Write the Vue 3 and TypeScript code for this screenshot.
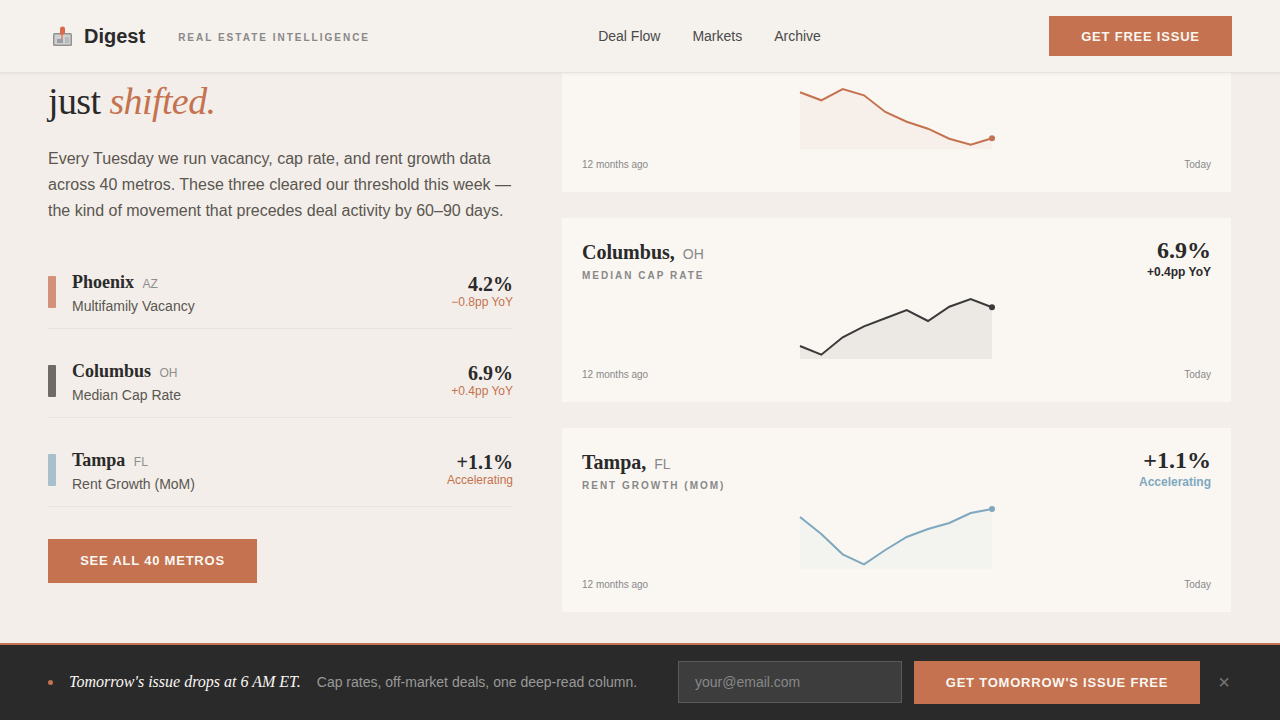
<script setup lang="ts">
type Metro = {
  name: string
  state: string
  metric: string
  value: string
  change: string
  color: string
  bar: string
  changeClass: string
  fillOpacity: number
  points: number[]
}

const metros: Metro[] = [
  {
    name: 'Phoenix',
    state: 'AZ',
    metric: 'Multifamily Vacancy',
    value: '4.2%',
    change: '−0.8pp YoY',
    color: '#c4724f',
    bar: '#d4917a',
    changeClass: 'accent',
    fillOpacity: 0.06,
    points: [4.3, 12.3, 1, 7.3, 24, 33.7, 40.7, 50.7, 56.7, 50.3],
  },
  {
    name: 'Columbus',
    state: 'OH',
    metric: 'Median Cap Rate',
    value: '6.9%',
    change: '+0.4pp YoY',
    color: '#3a3a3a',
    bar: '#6e6a65',
    changeClass: 'dark',
    fillOpacity: 0.07,
    points: [48, 56.7, 39.3, 28.3, 20.3, 12, 23, 8.7, 1, 9.3],
  },
  {
    name: 'Tampa',
    state: 'FL',
    metric: 'Rent Growth (MoM)',
    value: '+1.1%',
    change: 'Accelerating',
    color: '#7fa8bf',
    bar: '#a8bfcc',
    changeClass: 'blue',
    fillOpacity: 0.05,
    points: [9, 26, 46.3, 56.3, 42, 29, 21, 15, 5, 1],
  },
]

const step = 192 / 9

function linePath(points: number[]) {
  return points.map((y, i) => `${i === 0 ? 'M' : 'L'}${(i * step).toFixed(1)} ${y}`).join(' ')
}

function areaPath(points: number[]) {
  return `${linePath(points)} L192 61 L0 61 Z`
}
</script>

<template>
  <div class="page">
    <header class="topbar">
      <div class="brand">
        <svg class="logo" width="22" height="22" viewBox="0 0 22 22" aria-hidden="true">
          <rect x="2" y="8" width="19" height="13" rx="1.5" fill="#929290" />
          <rect x="3.500" y="9.500" width="16" height="10" fill="#cfd1d1" />
          <path d="M6 14h6v4H6z" fill="#9a9ea2" />
          <path d="M14 12h4v6h-4z" fill="#b7babb" />
          <rect x="10" y="8" width="2" height="6" fill="#dd9078" />
          <path d="M9 3.500q0-2 2.500-2t2.500 2v4l-1.500 2h-3.500z" fill="#d9694a" />
        </svg>
        <span class="brand-name">Digest</span>
        <span class="tagline">REAL ESTATE INTELLIGENCE</span>
      </div>
      <nav class="nav">
        <a>Deal Flow</a>
        <a>Markets</a>
        <a>Archive</a>
      </nav>
      <button class="cta top-cta">GET FREE ISSUE</button>
    </header>

    <main class="content">
      <div class="hero">
        <section class="intro">
          <h1>just <em>shifted.</em></h1>
          <p class="lead">
            Every Tuesday we run vacancy, cap rate, and rent growth data across 40 metros. These three
            cleared our threshold this week — the kind of movement that precedes deal activity by 60–90 days.
          </p>
          <ul class="rows">
            <li v-for="m in metros" :key="m.name" class="row">
              <span class="bar" :style="{ background: m.bar }"></span>
              <div class="row-main">
                <div class="row-name">{{ m.name }} <small>{{ m.state }}</small></div>
                <div class="row-metric">{{ m.metric }}</div>
              </div>
              <div class="row-side">
                <div class="row-value">{{ m.value }}</div>
                <div class="row-change">{{ m.change }}</div>
              </div>
            </li>
          </ul>
          <button class="cta all-cta">SEE ALL 40 METROS</button>
        </section>

        <section class="cards">
          <article v-for="(m, i) in metros" :key="m.name" class="card">
            <!-- first card is scrolled under the header, its head is out of view -->
            <div class="card-head" :class="{ 'under-header': i === 0 }">
              <div>
                <div class="card-name">{{ m.name }}, <small>{{ m.state }}</small></div>
                <div class="card-label">{{ m.metric }}</div>
              </div>
              <div class="card-side">
                <div class="card-value">{{ m.value }}</div>
                <div class="card-change" :class="m.changeClass">{{ m.change }}</div>
              </div>
            </div>
            <svg class="spark" width="192" height="61" viewBox="0 0 192 61">
              <path :d="areaPath(m.points)" :fill="m.color" :fill-opacity="m.fillOpacity" />
              <path :d="linePath(m.points)" fill="none" :stroke="m.color" stroke-width="2" />
              <circle cx="192" :cy="m.points[9]" r="3" :fill="m.color" />
            </svg>
            <div class="card-foot">
              <span>12 months ago</span>
              <span>Today</span>
            </div>
          </article>
        </section>
      </div>
    </main>

    <footer class="banner">
      <span class="dot"></span>
      <em class="banner-title">Tomorrow's issue drops at 6 AM ET.</em>
      <span class="banner-sub">Cap rates, off-market deals, one deep-read column.</span>
      <input class="email" type="email" placeholder="your@email.com" />
      <button class="cta banner-cta">GET TOMORROW'S ISSUE FREE</button>
      <button class="close" aria-label="Close">×</button>
    </footer>
  </div>
</template>

<style scoped>
.page {
  height: 720px;
  overflow: hidden;
  display: flex;
  flex-direction: column;
  background: #f3eee9;
  color: #2a2a2a;
  font-family: "Liberation Sans", Arial, sans-serif;
}
.topbar {
  position: relative;
  z-index: 2;
  flex: none;
  height: 73px;
  box-sizing: border-box;
  padding: 0 48px;
  display: flex;
  justify-content: space-between;
  align-items: center;
  background: #f5f1ec;
  border-bottom: 1px solid #e8e3dd;
  box-shadow: 0 1px 3px rgba(0, 0, 0, 0.05);
}
.brand {
  display: flex;
  align-items: center;
}
.logo {
  margin: 0 11px 0 3px;
}
.brand-name {
  font-size: 20px;
  font-weight: 700;
  color: #2a2a2a;
}
.tagline {
  margin: 2px 0 0 33px;
  font-size: 10px;
  font-weight: 700;
  letter-spacing: 2px;
  color: #888888;
}
.nav {
  display: flex;
  gap: 32px;
  font-size: 14px;
  color: #4a4a4a;
}
.cta {
  border: none;
  background: #c4724f;
  color: #faf7f3;
  font-family: inherit;
  font-size: 13px;
  font-weight: 700;
  letter-spacing: 0.78px;
  padding: 0;
}
.top-cta {
  width: 183px;
  height: 40px;
}
.content {
  flex: 1;
  min-height: 0;
  overflow: hidden;
}
.hero {
  margin-top: -65px;
  padding: 0 48px;
  display: grid;
  grid-template-columns: 465px 669px;
  gap: 49px;
  align-items: start;
}
.intro {
  padding-top: 69px;
}
h1 {
  margin: 0;
  font-family: "Liberation Serif", "Times New Roman", serif;
  font-size: 38px;
  font-weight: 400;
  line-height: 48px;
  letter-spacing: -0.6px;
  color: #2a2a2a;
}
h1 em {
  color: #c4724f;
}
.lead {
  margin: 21px 0 0;
  font-size: 16px;
  line-height: 26px;
  color: #5a5651;
}
.rows {
  list-style: none;
  margin: 16px 0 0;
  padding: 0;
}
.row {
  height: 89px;
  box-sizing: border-box;
  display: flex;
  align-items: center;
  padding-top: 16px;
  border-bottom: 1px solid #e8e3dd;
}
.bar {
  flex: none;
  width: 8px;
  height: 32px;
  border-radius: 1px;
  margin-right: 16px;
}
.row-main {
  flex: 1;
}
.row-name {
  font-family: "Liberation Serif", "Times New Roman", serif;
  font-size: 18px;
  font-weight: 700;
  line-height: 26px;
  color: #2a2a2a;
}
.row-name small {
  margin-left: 4px;
  font-family: "Liberation Sans", Arial, sans-serif;
  font-size: 12px;
  font-weight: 400;
  color: #8e8e8e;
}
.row-metric {
  margin-top: -1px;
  font-size: 14px;
  line-height: 20px;
  color: #5a5651;
}
.row-side {
  text-align: right;
  margin-bottom: 2px;
}
.row-value {
  font-family: "Liberation Serif", "Times New Roman", serif;
  font-size: 20px;
  font-weight: 700;
  line-height: 22px;
  color: #2a2a2a;
}
.row-change {
  font-size: 12px;
  line-height: 14px;
  color: #c4724f;
}
.all-cta {
  display: block;
  margin-top: 32px;
  padding-bottom: 2px;
  width: 209px;
  height: 44px;
}
.cards {
  display: flex;
  flex-direction: column;
  gap: 26px;
}
.card {
  height: 184px;
  box-sizing: border-box;
  padding: 20px;
  background: #faf7f3;
  display: flex;
  flex-direction: column;
}
.card-head {
  flex: none;
  height: 60px;
  display: flex;
  justify-content: space-between;
  align-items: flex-start;
}
.under-header {
  visibility: hidden;
}
.card-name {
  font-family: "Liberation Serif", "Times New Roman", serif;
  font-size: 20px;
  font-weight: 700;
  line-height: 28px;
  color: #2a2a2a;
}
.card-name small {
  margin-left: 3px;
  font-family: "Liberation Sans", Arial, sans-serif;
  font-size: 14px;
  font-weight: 400;
  color: #888888;
}
.card-label {
  margin-top: 1px;
  font-size: 10px;
  font-weight: 700;
  line-height: 14px;
  letter-spacing: 2px;
  text-transform: uppercase;
  color: #888888;
}
.card-side {
  text-align: right;
}
.card-value {
  font-family: "Liberation Serif", "Times New Roman", serif;
  font-size: 24px;
  font-weight: 700;
  line-height: 24px;
  color: #2a2a2a;
}
.card-change {
  margin-top: 2px;
  font-size: 12px;
  font-weight: 700;
  line-height: 16px;
}
.card-change.accent {
  color: #c4724f;
}
.card-change.dark {
  color: #2a2a2a;
}
.card-change.blue {
  color: #7fa8bf;
}
.spark {
  align-self: center;
  flex: none;
  margin-left: -1px;
  overflow: visible;
}
.card-foot {
  margin-top: 9px;
  display: flex;
  justify-content: space-between;
  font-size: 10px;
  line-height: 14px;
  color: #888888;
}
.banner {
  flex: none;
  height: 77px;
  box-sizing: border-box;
  border-top: 2px solid #c4724f;
  padding: 0 48px;
  display: flex;
  align-items: center;
  background: #2a2a2a;
}
.dot {
  flex: none;
  width: 5px;
  height: 5px;
  border-radius: 50%;
  background: #c4724f;
  margin: 0 16px 1px 0;
}
.banner-title {
  margin-bottom: 2px;
  font-family: "Liberation Serif", "Times New Roman", serif;
  font-size: 16px;
  color: #faf7f3;
  white-space: nowrap;
}
.banner-sub {
  flex: 1;
  margin: 0 0 2px 16px;
  font-size: 14px;
  color: #999999;
  white-space: nowrap;
}
.email {
  width: 224px;
  height: 42px;
  box-sizing: border-box;
  margin-bottom: 1px;
  padding: 0 16px;
  border: 1px solid #5a5a5a;
  border-radius: 0;
  background: #3d3d3d;
  color: #faf7f3;
  font-family: inherit;
  font-size: 14px;
  outline: none;
}
.email::placeholder {
  color: #888888;
  opacity: 1;
}
.banner-cta {
  margin-left: 12px;
  width: 286px;
  height: 43px;
}
.close {
  border: none;
  background: none;
  margin-left: 16px;
  padding: 0;
  width: 16px;
  font-family: inherit;
  font-size: 20px;
  color: #777777;
}
</style>
